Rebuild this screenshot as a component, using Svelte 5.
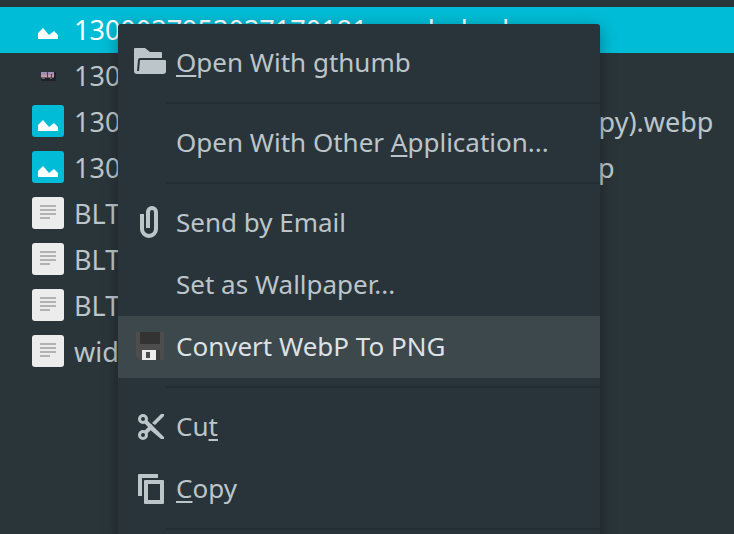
<script lang="ts">
	type Kind = 'image' | 'thumb' | 'text';

	interface FileEntry {
		name: string;
		kind: Kind;
		selected?: boolean;
	}

	interface MenuItem {
		label: string;
		icon?: string;
		// index of the underlined mnemonic letter
		key?: number;
	}

	const files: FileEntry[] = [
		{ name: '1300037953037170181__webobad', kind: 'image', selected: true },
		{ name: '1300037953037170181.png', kind: 'thumb' },
		{ name: '1300037953037170181__webobad_on (copy).webp', kind: 'image' },
		{ name: '1300037953037170181__webobad_n.webp', kind: 'image' },
		{ name: 'BLTouch', kind: 'text' },
		{ name: 'BLTouch', kind: 'text' },
		{ name: 'BLTouch', kind: 'text' },
		{ name: 'widget', kind: 'text' }
	];

	const groups: MenuItem[][] = [
		[{ label: 'Open With gthumb', icon: 'folder', key: 0 }],
		[{ label: 'Open With Other Application...', key: 16 }],
		[
			{ label: 'Send by Email', icon: 'clip' },
			{ label: 'Set as Wallpaper...' },
			{ label: 'Convert WebP To PNG', icon: 'floppy' }
		],
		[
			{ label: 'Cut', icon: 'cut', key: 2 },
			{ label: 'Copy', icon: 'copy', key: 0 }
		],
		[]
	];

	let active = $state('Convert WebP To PNG');
</script>

{#snippet fileIcon(kind: Kind)}
	<svg class="file-icon" viewBox="0 0 32 32" aria-hidden="true">
		{#if kind === 'image'}
			<rect width="32" height="32" rx="3" fill="#00bcd6" />
			<path d="M6 26v-6l5-5 6 7 5-4 4 4v4z" fill="#fff" />
		{:else if kind === 'thumb'}
			<rect x="9" y="13" width="15" height="9" fill="#231f28" />
			<rect x="9" y="13" width="13" height="3" fill="#a58bb0" />
			<rect x="9" y="16" width="13" height="2" fill="#c29aa8" />
			<rect x="9" y="18" width="13" height="1" fill="#7a5c6c" />
			<path d="M15 13h1v6h-1zM19 15h1v4h-1z" fill="#4a3e54" />
			<path d="M10 19h3v1h-3zM18 19h2v1h-2z" fill="#4c7470" />
		{:else}
			<rect width="32" height="32" rx="3" fill="#ececec" />
			<path d="M8 8h16v2H8zM8 12h16v2H8zM8 16h16v2H8zM8 20h10v2H8z" fill="#b2b2b2" />
		{/if}
	</svg>
{/snippet}

{#snippet menuIcon(name: string | undefined)}
	<svg class="menu-icon" viewBox="0 0 32 32" aria-hidden="true">
		{#if name === 'folder'}
			<path
				d="M1 2h10l5 4h11q1 0 1 1v5H6q-2 0-2 2L3 25h2l1-11h25q1 0 1 1v10q0 3-3 3H3q-3 0-3-3V3q0-1 1-1z"
			/>
		{:else if name === 'clip'}
			<path
				d="M8 8v15a7 7 0 0 0 14 0V6a4 4 0 0 0-8 0v16"
				fill="none"
				stroke="currentColor"
				stroke-width="4"
			/>
		{:else if name === 'floppy'}
			<path d="M3 2h26q1 0 1 1v26q0 1-1 1H6l-4-4V3q0-1 1-1z" fill="#4d4d4d" />
			<path d="M6 2h20v11q0 1-1 1H7q-1 0-1-1z" fill="#333" />
			<path d="M8 20h18v10H8z" fill="#3b3b3b" />
			<path d="M8 20h14v10H8z" fill="#ececec" />
			<path d="M12 22h4v6h-4z" fill="#4d4d4d" />
		{:else if name === 'cut'}
			<g fill="none" stroke="currentColor" stroke-width="3">
				<circle cx="9" cy="9" r="3.500" />
				<circle cx="9" cy="25" r="3.500" />
				<path d="M11 11l6 6M11 23l6-6" stroke-width="4" />
			</g>
			<path d="M14 16l3-2 13 13v2h-3L14 18zM18 13l9-9h3v2l-9 9z" />
		{:else if name === 'copy'}
			<path d="M5 2h19v4H8v18H4V3q0-1 1-1z" />
			<path fill-rule="evenodd" d="M11 8h18q1 0 1 1v22q0 1-1 1H11q-1 0-1-1V9q0-1 1-1zm3 4v16h12V12z" />
		{/if}
	</svg>
{/snippet}

<div class="window">
	<ul class="files">
		{#each files as file}
			<li class:selected={file.selected}>
				{@render fileIcon(file.kind)}
				<span class="name">{file.name}</span>
			</li>
		{/each}
	</ul>

	<div class="menu" role="menu">
		{#each groups as group}
			<div class="group" role="group">
				{#each group as item (item.label)}
					<button
						class="item"
						class:active={active === item.label}
						role="menuitem"
						onmouseenter={() => (active = item.label)}
					>
						{@render menuIcon(item.icon)}
						<span class="label">
							{#if item.key === undefined}
								{item.label}
							{:else}
								{item.label.slice(0, item.key)}<u>{item.label[item.key]}</u>{item.label.slice(item.key + 1)}
							{/if}
						</span>
					</button>
				{/each}
			</div>
		{/each}
	</div>
</div>

<style>
	:global(body) {
		margin: 0;
		background: #2a353a;
	}

	.window {
		position: relative;
		height: 100vh;
		overflow: hidden;
		font-family: 'Noto Sans', 'Open Sans', sans-serif;
		font-size: 26px;
		color: #bcc5ca;
	}

	.files {
		margin: 0;
		padding: 7px 0 0;
		list-style: none;
		font-size: 27px;
	}

	.files li {
		display: flex;
		align-items: center;
		gap: 10px;
		box-sizing: border-box;
		height: 46px;
		padding: 0 0 2px 32px;
		white-space: nowrap;
	}

	.files .selected {
		background: #00bcd6;
		color: #fff;
	}

	.file-icon,
	.menu-icon {
		width: 32px;
		height: 32px;
		flex-shrink: 0;
	}

	.menu {
		position: absolute;
		top: 24px;
		left: 118px;
		width: 482px;
		padding: 8px 0;
		box-sizing: border-box;
		background: #29343a;
		border-radius: 3px;
		box-shadow: 0 4px 16px rgba(0, 0, 0, 0.35);
	}

	.group + .group::before {
		content: '';
		display: block;
		height: 2px;
		margin: 8px 0 8px 48px;
		background: #232d32;
	}

	.item {
		display: flex;
		align-items: center;
		gap: 10px;
		box-sizing: border-box;
		width: 100%;
		height: 62px;
		padding: 0 16px 2px;
		border: 0;
		background: none;
		font: inherit;
		color: inherit;
		text-align: left;
		white-space: nowrap;
	}

	.item.active {
		background: #3d484d;
		color: #dce2e5;
	}

	.menu-icon {
		fill: currentColor;
		color: #bcc5ca;
	}

	u {
		text-decoration-thickness: 2px;
		text-underline-offset: 3px;
	}
</style>
